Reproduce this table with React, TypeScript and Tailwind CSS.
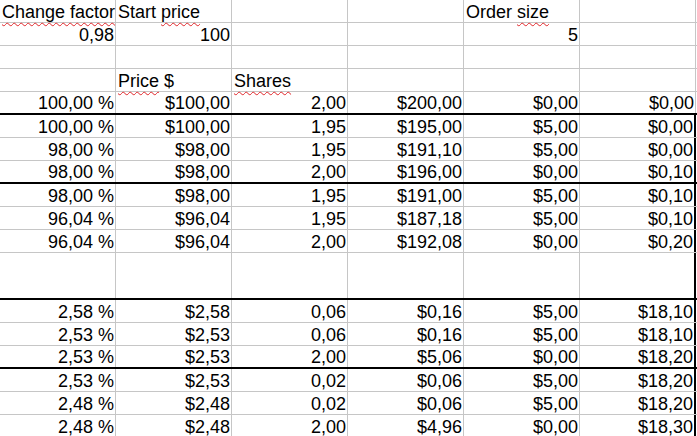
import type { ReactNode } from "react";

type Row = {
    cells: ReactNode[];
    tall?: boolean;
    thick?: boolean;
    boxed?: boolean;
};

// spell-check squiggle
const Sq = ({ children }: { children: ReactNode }) => (
    <span className="underline decoration-wavy decoration-[#e0262a] decoration-1 underline-offset-[4px]">
        {children}
    </span>
);

const rows: Row[] = [
    { cells: [<Sq>Change factor</Sq>, <>Start <Sq>price</Sq></>, "", "", <>Order <Sq>size</Sq></>, ""] },
    { cells: ["0,98", "100", "", "", "5", ""] },
    { cells: ["", "", "", "", "", ""] },
    { cells: ["", <><Sq>Price</Sq> $</>, <Sq>Shares</Sq>, "", "", ""] },
    { cells: ["100,00 %", "$100,00", "2,00", "$200,00", "$0,00", "$0,00"], thick: true },
    { cells: ["100,00 %", "$100,00", "1,95", "$195,00", "$5,00", "$0,00"], boxed: true },
    { cells: ["98,00 %", "$98,00", "1,95", "$191,10", "$5,00", "$0,00"], boxed: true },
    { cells: ["98,00 %", "$98,00", "2,00", "$196,00", "$0,00", "$0,10"], boxed: true, thick: true },
    { cells: ["98,00 %", "$98,00", "1,95", "$191,00", "$5,00", "$0,10"], boxed: true },
    { cells: ["96,04 %", "$96,04", "1,95", "$187,18", "$5,00", "$0,10"], boxed: true },
    { cells: ["96,04 %", "$96,04", "2,00", "$192,08", "$0,00", "$0,20"], boxed: true },
    { cells: ["", "", "", "", "", ""], boxed: true, thick: true, tall: true },
    { cells: ["2,58 %", "$2,58", "0,06", "$0,16", "$5,00", "$18,10"], boxed: true },
    { cells: ["2,53 %", "$2,53", "0,06", "$0,16", "$5,00", "$18,10"], boxed: true },
    { cells: ["2,53 %", "$2,53", "2,00", "$5,06", "$0,00", "$18,20"], boxed: true, thick: true },
    { cells: ["2,53 %", "$2,53", "0,02", "$0,06", "$5,00", "$18,20"], boxed: true },
    { cells: ["2,48 %", "$2,48", "0,02", "$0,06", "$5,00", "$18,20"], boxed: true },
    { cells: ["2,48 %", "$2,48", "2,00", "$4,96", "$0,00", "$18,30"], boxed: true },
];

export default function App() {
    return (
        <div
            className="w-[697px] h-[436px] overflow-hidden bg-white text-black text-[18px] leading-[1.12]"
            style={{ fontFamily: '"Liberation Sans", Arial, sans-serif' }}
        >
            {rows.map((row, i) => (
                <div
                    key={i}
                    className={
                        "flex " +
                        (row.tall ? "h-[47px] " : "h-[23px] ") +
                        (row.thick ? "border-b-2 border-black" : "border-b border-[#c6c6c6]")
                    }
                >
                    {row.cells.map((cell, j) => {
                        const right = typeof cell === "string" && /^[\d$]/.test(cell);
                        const last = j === row.cells.length - 1;
                        return (
                            <div
                                key={j}
                                className={
                                    "w-[116px] shrink-0 flex items-end pl-[2px] pr-[1px] whitespace-pre overflow-visible " +
                                    (right ? "justify-end " : "justify-start ") +
                                    (last && row.boxed ? "border-r-2 border-black" : "border-r border-[#c6c6c6]")
                                }
                            >
                                <span>{cell}</span>
                            </div>
                        );
                    })}
                </div>
            ))}
        </div>
    );
}
